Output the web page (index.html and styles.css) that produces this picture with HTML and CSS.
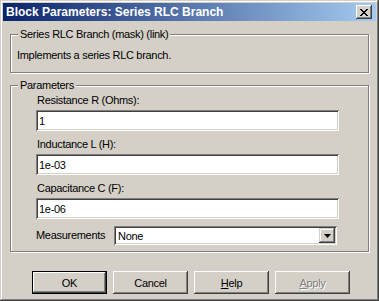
FILE: index.html
```html
<!DOCTYPE html>
<html lang="en">
<head>
    <meta charset="UTF-8">
    <title>Block Parameters: Series RLC Branch</title>
    <link rel="stylesheet" href="styles.css">
</head>
<body>
    <div class="window">
        <div class="titlebar">
            <span class="title">Block Parameters: Series RLC Branch</span>
            <button class="close" type="button">
                <svg width="8" height="7" viewBox="0 0 8 7"><path d="M0 0h2v1h1v1h2v-1h1v-1h2v1h-1v1h-1v1h-1v1h1v1h1v1h1v1h-2v-1h-1v-1h-2v1h-1v1h-2v-1h1v-1h1v-1h1v-1h-1v-1h-1v-1h-1z" fill="#000"/></svg>
            </button>
        </div>
        <div class="content">
            <fieldset class="group desc">
                <legend>Series RLC Branch (mask) (link)</legend>
                <p>Implements a series RLC branch.</p>
            </fieldset>
            <fieldset class="group params">
                <legend>Parameters</legend>
                <label class="label">Resistance R (Ohms):</label>
                <input class="edit" type="text" value="1">
                <label class="label">Inductance L (H):</label>
                <input class="edit" type="text" value="1e-03">
                <label class="label">Capacitance C (F):</label>
                <input class="edit" type="text" value="1e-06">
                <div class="row">
                    <label class="label inline">Measurements</label>
                    <div class="combo">
                        <span class="combo-text">None</span>
                        <span class="drop">
                            <svg width="7" height="4" viewBox="0 0 7 4"><path d="M0 0h7l-3.5 4z" fill="#000"/></svg>
                        </span>
                    </div>
                </div>
            </fieldset>
            <div class="buttons">
                <button class="btn default" type="button">OK</button>
                <button class="btn" type="button">Cancel</button>
                <button class="btn" type="button"><u>H</u>elp</button>
                <button class="btn disabled" type="button"><u>A</u>pply</button>
            </div>
        </div>
    </div>
</body>
</html>
```

FILE: styles.css
```css
body {
    margin: 0;
    font-family: "Liberation Sans", Arial, sans-serif;
    font-size: 11px;
    letter-spacing: -0.3px;
    color: #000;
    background: #d4d0c8;
}
.window {
    width: 379px;
    height: 301px;
    box-sizing: border-box;
    padding: 3px;
    background: #d4d0c8;
    box-shadow: inset -1px -1px #404040, inset 1px 1px #d4d0c8, inset -2px -2px #808080, inset 2px 2px #fff;
}
.titlebar {
    height: 18px;
    display: flex;
    align-items: center;
    padding: 0 4px 0 3px;
    background: linear-gradient(90deg, #0a246a, #a6caf0);
}
.title {
    flex: 1;
    color: #fff;
    font-weight: bold;
    font-size: 12px;
    letter-spacing: 0;
}
.close {
    width: 16px;
    height: 14px;
    padding: 0;
    border: none;
    display: flex;
    align-items: center;
    justify-content: center;
    background: #d4d0c8;
    box-shadow: inset -1px -1px #404040, inset 1px 1px #fff, inset -2px -2px #808080, inset 2px 2px #d4d0c8;
}
.content {
    padding: 7px 7px 0;
}
.group {
    margin: 0;
    border: 1px solid #808080;
    box-shadow: inset 1px 1px #fff, 1px 1px #fff;
    padding: 0 0 0 25px;
    width: 359px;
    box-sizing: border-box;
}
.group legend {
    padding: 0 2px;
    margin-left: -18px;
    line-height: 13px;
    background: #d4d0c8;
}
.desc {
    height: 45px;
}
.desc p {
    margin: 8px 0 0 -19px;
    line-height: 13px;
}
.params {
    margin-top: 6px;
    padding-top: 1px;
    padding-bottom: 6px;
}
.label {
    display: block;
    line-height: 13px;
    margin: 1px 0 3px 1px;
}
.label.inline {
    margin: 0;
    width: 78px;
}
.edit {
    display: block;
    width: 303px;
    height: 21px;
    margin: 0 0 7px;
    padding: 1px 3px 0;
    box-sizing: border-box;
    border: none;
    outline: none;
    font: inherit;
    letter-spacing: inherit;
    background: #fff;
    box-shadow: inset 1px 1px #808080, inset -1px -1px #fff, inset 2px 2px #404040, inset -2px -2px #d4d0c8;
}
.row {
    display: flex;
    align-items: center;
}
.combo {
    width: 223px;
    height: 19px;
    box-sizing: border-box;
    padding: 2px;
    display: flex;
    align-items: center;
    background: #fff;
    box-shadow: inset 1px 1px #808080, inset -1px -1px #fff, inset 2px 2px #404040, inset -2px -2px #d4d0c8;
}
.combo-text {
    flex: 1;
    padding-left: 2px;
}
.drop {
    width: 16px;
    height: 15px;
    display: flex;
    align-items: center;
    justify-content: center;
    background: #d4d0c8;
    box-shadow: inset -1px -1px #404040, inset 1px 1px #d4d0c8, inset -2px -2px #808080, inset 2px 2px #fff;
}
.buttons {
    display: flex;
    gap: 6px;
    margin: 19px 0 0 22px;
}
.btn {
    width: 75px;
    height: 23px;
    padding: 0;
    border: none;
    font: inherit;
    letter-spacing: inherit;
    color: #000;
    background: #d4d0c8;
    box-shadow: inset -1px -1px #404040, inset 1px 1px #fff, inset -2px -2px #808080, inset 2px 2px #d4d0c8;
}
.btn.default {
    box-shadow: inset 0 0 0 1px #000, inset -2px -2px #404040, inset 2px 2px #fff, inset -3px -3px #808080;
}
.btn.disabled {
    color: #808080;
    text-shadow: 1px 1px #fff;
}
```
